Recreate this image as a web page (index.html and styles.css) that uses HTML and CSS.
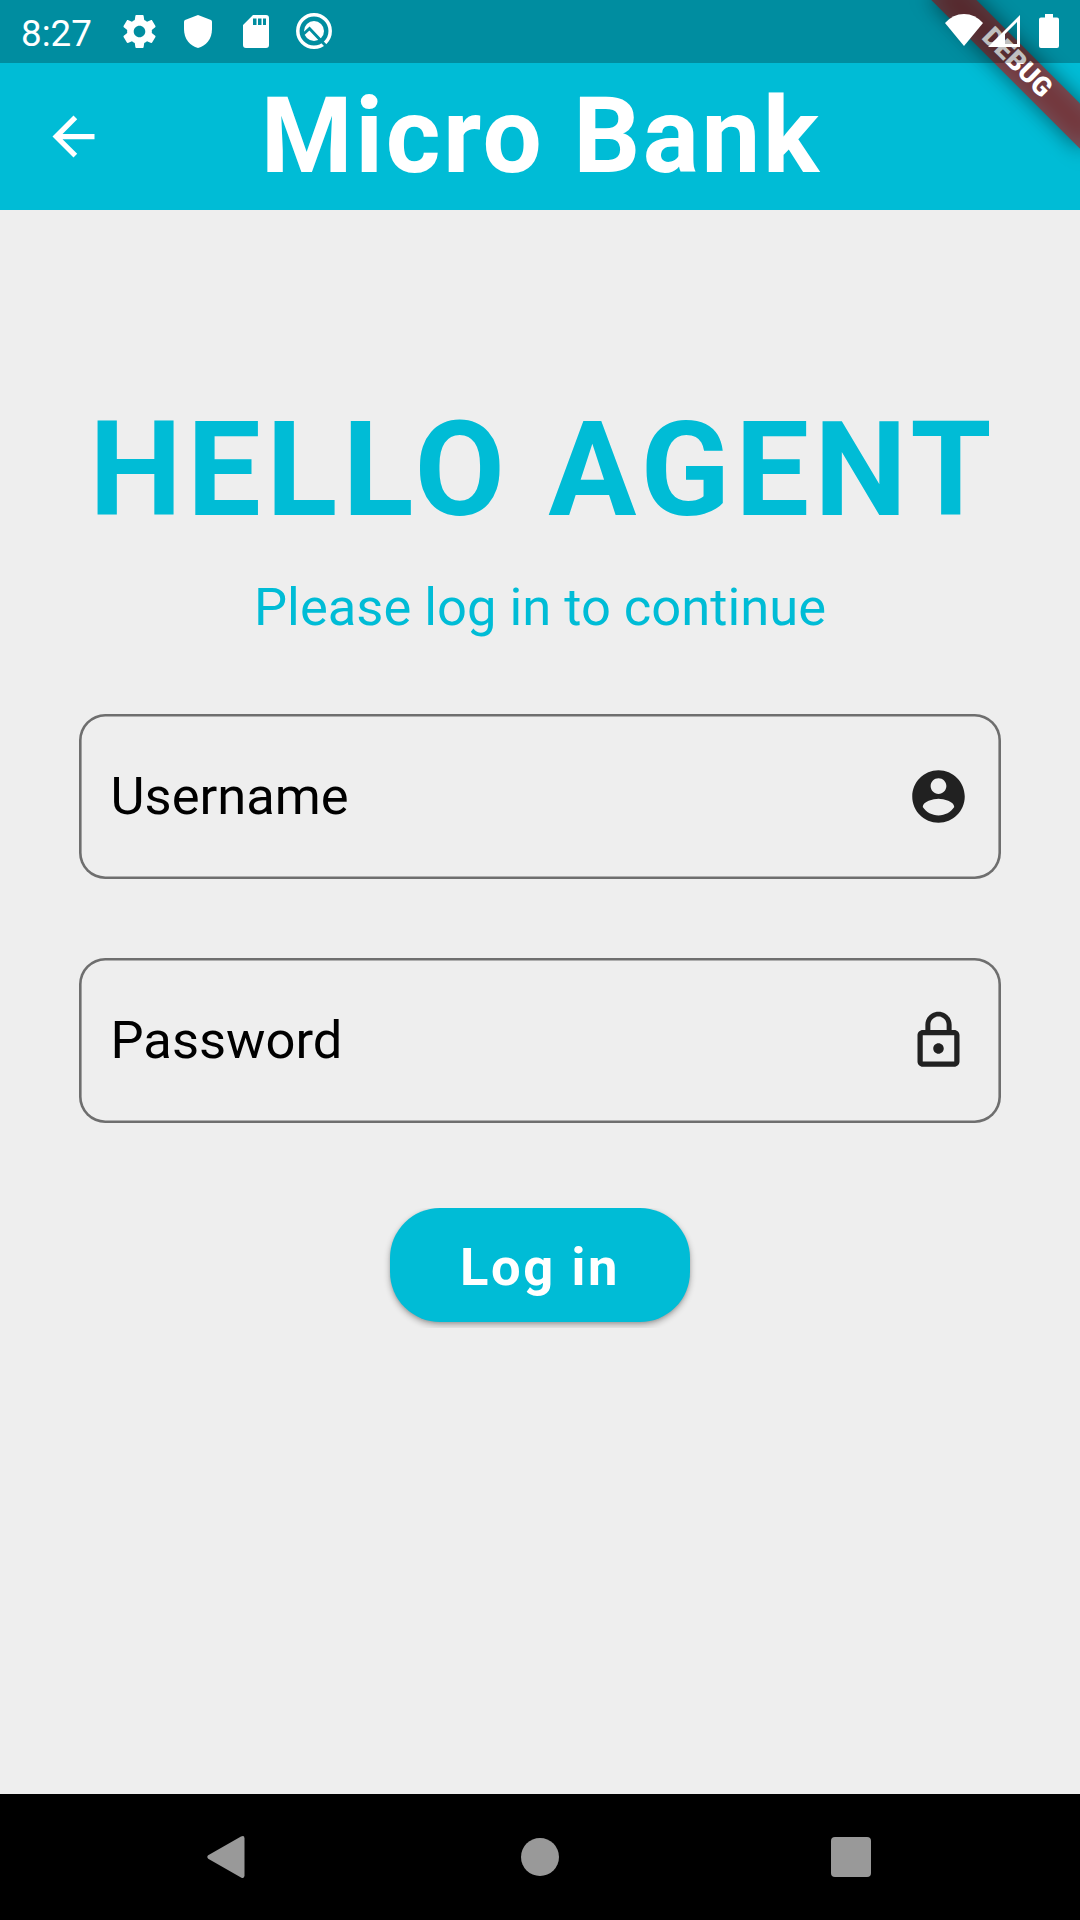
FILE: index.html
```html
<!DOCTYPE html>
<html lang="en">
<head>
<meta charset="utf-8">
<title>Micro Bank</title>
<link rel="stylesheet" href="styles.css">
</head>
<body>
<div class="screen">
  <header class="app-bar">
    <svg class="back" viewBox="0 0 24 24"><path d="M20 11H7.83l5.59-5.59L12 4l-8 8 8 8 1.41-1.41L7.83 13H20v-2z"/></svg>
    <h1 class="app-title">Micro Bank</h1>
  </header>

  <main class="content">
    <h2 class="greeting">HELLO AGENT</h2>
    <p class="prompt">Please log in to continue</p>
    <div class="field">
      <span class="label">Username</span>
      <svg class="field-icon" viewBox="0 0 24 24"><path d="M12 2C6.48 2 2 6.48 2 12s4.48 10 10 10 10-4.48 10-10S17.52 2 12 2zm0 3c1.66 0 3 1.34 3 3s-1.34 3-3 3-3-1.34-3-3 1.34-3 3-3zm0 14.2c-2.5 0-4.71-1.28-6-3.22.03-1.99 4-3.08 6-3.08 1.99 0 5.97 1.09 6 3.08-1.29 1.94-3.5 3.22-6 3.22z"/></svg>
    </div>
    <div class="field">
      <span class="label">Password</span>
      <svg class="field-icon" viewBox="0 0 24 24"><path d="M12 17c1.1 0 2-.9 2-2s-.9-2-2-2-2 .9-2 2 .9 2 2 2zm6-9h-1V6c0-2.76-2.24-5-5-5S7 3.24 7 6v2H6c-1.1 0-2 .9-2 2v10c0 1.1.9 2 2 2h12c1.1 0 2-.9 2-2V10c0-1.1-.9-2-2-2zM8.9 6c0-1.71 1.39-3.1 3.1-3.1s3.1 1.39 3.1 3.1v2H8.9V6zM18 20H6V10h12v10z"/></svg>
    </div>
    <div class="button-wrap"><button class="login" type="button">Log in</button></div>
  </main>

  <nav class="nav-bar">
    <svg class="nav-back" viewBox="0 0 38 42"><path d="M1.2 19.3 34 .6Q37.5-1 37.5 2.5V39.5Q37.5 43 34 41.4L1.2 22.7Q-.6 21 1.2 19.3z"/></svg>
    <span class="nav-home"></span>
    <span class="nav-recent"></span>
  </nav>

  <div class="banner-corner">
    <div class="banner-shadow"></div>
    <div class="banner">DEBUG</div>
  </div>

  <div class="status-bar">
    <span class="clock">8:27</span>
    <svg class="gear" viewBox="2 2 20 20"><path d="M19.43 12.98c.04-.32.07-.64.07-.98s-.03-.66-.07-.98l2.11-1.65c.19-.15.24-.42.12-.64l-2-3.46c-.12-.22-.39-.3-.61-.22l-2.49 1c-.52-.4-1.08-.73-1.69-.98l-.38-2.65C14.46 2.18 14.25 2 14 2h-4c-.25 0-.46.18-.49.42l-.38 2.65c-.61.25-1.17.59-1.69.98l-2.49-1c-.23-.09-.49 0-.61.22l-2 3.46c-.13.22-.07.49.12.64l2.11 1.65c-.04.32-.07.65-.07.98s.03.66.07.98l-2.11 1.65c-.19.15-.24.42-.12.64l2 3.46c.12.22.39.3.61.22l2.49-1c.52.4 1.08.73 1.69.98l.38 2.65c.03.24.24.42.49.42h4c.25 0 .46-.18.49-.42l.38-2.65c.61-.25 1.17-.59 1.69-.98l2.49 1c.23.09.49 0 .61-.22l2-3.46c.12-.22.07-.49-.12-.64l-2.11-1.65zM12 15.5c-1.93 0-3.5-1.57-3.5-3.5s1.57-3.5 3.5-3.5 3.5 1.57 3.5 3.5-1.57 3.5-3.5 3.5z"/></svg>
    <svg class="shield" viewBox="0 0 28 33"><path d="M14 0 27 5Q28 5.5 28 6.5V14C28 24 22 31 14 33 6 31 0 24 0 14V6.5Q0 5.5 1 5z"/></svg>
    <svg class="sd" viewBox="0 0 26 33"><path fill-rule="evenodd" d="M10 0H23Q26 0 26 3V30Q26 33 23 33H3Q0 33 0 30V10zM10 3.5V10H13.5V3.5zM15 3.5V10H18.5V3.5zM20 3.5V10H23V3.5z"/></svg>
    <svg class="q-icon" viewBox="0 0 36 36"><circle class="ring" cx="18" cy="18" r="16.2"/><circle cx="18" cy="18" r="10"/><path class="cut" d="M7.5 21 13.500 15.500 30 33"/></svg>
    <span class="spacer"></span>
    <svg class="wifi" viewBox="0 0 38 32"><path d="M19 32 0 9Q8 0 19 0T38 9z"/></svg>
    <svg class="signal" viewBox="0 0 32 32"><path fill-rule="evenodd" d="M0 32 32 0V32zM17 19V29H29V7z"/></svg>
    <svg class="battery" viewBox="0 0 20 34"><path d="M6 0H14V3.5H18Q20 3.5 20 5.5V32Q20 34 18 34H2Q0 34 0 32V5.5Q0 3.5 2 3.5H6z"/></svg>
  </div>
</div>
</body>
</html>
```
FILE: styles.css
```css
* { box-sizing: border-box; }

body {
  margin: 0;
  font-family: Roboto, sans-serif;
}

h1, h2, p { margin: 0; }

svg { display: block; flex: none; }

.screen {
  position: relative;
  display: flex;
  flex-direction: column;
  width: 1080px;
  height: 1920px;
  overflow: hidden;
  background: #eeeeee;
}

/* App bar */
.app-bar {
  display: grid;
  grid-template-columns: 147px 1fr 147px;
  align-items: center;
  height: 210px;
  padding-top: 63px;
  background: #00bcd6;
  color: #fff;
}

.back {
  width: 63px;
  height: 63px;
  justify-self: center;
  fill: #fff;
}

.app-title {
  margin-right: -2.6px;
  font-size: 105px;
  font-weight: 700;
  line-height: 123px;
  letter-spacing: 2.625px;
  text-align: center;
  white-space: nowrap;
}

/* Login form */
.content {
  flex: 1;
  padding: 183px 79px 0;
  color: #00bcd6;
}

.greeting {
  margin-right: -6px;
  font-size: 131.25px;
  font-weight: 700;
  line-height: 154px;
  letter-spacing: 5.25px;
  text-align: center;
  white-space: nowrap;
}

.prompt {
  margin: 29px 0 76px;
  font-size: 52.5px;
  line-height: 62px;
  text-align: center;
}

.field {
  display: flex;
  align-items: center;
  justify-content: space-between;
  height: 165px;
  margin-bottom: 79px;
  padding: 0 31px 0 31.5px;
  border-radius: 26.25px;
  box-shadow: inset 0 0 0 2.6px #6e6e6e;
}

.label {
  padding-bottom: 1px;
  color: #000;
  font-size: 52.5px;
  line-height: 62px;
}

.field-icon {
  width: 63px;
  height: 63px;
  fill: #212121;
}

.button-wrap {
  display: flex;
  justify-content: center;
  margin-top: 85px;
  padding-bottom: 6px;
  overflow: hidden;
}

.login {
  width: 300px;
  height: 114px;
  padding: 4px 0 0;
  border: 0;
  border-radius: 50px;
  background: #00bcd6;
  box-shadow: 0 3px 6px rgba(0, 0, 0, .3), 0 1px 3px rgba(0, 0, 0, .1);
  color: #fff;
  font: 700 52.5px/62px Roboto, sans-serif;
  letter-spacing: 2.625px;
}

/* System navigation */
.nav-bar {
  display: flex;
  align-items: center;
  height: 126px;
  padding: 0 209px 0 206.5px;
  justify-content: space-between;
  background: #000;
}

.nav-back {
  width: 38px;
  height: 42px;
  fill: #999;
}

.nav-home {
  width: 38px;
  height: 38px;
  margin-left: 3.5px;
  border-radius: 50%;
  background: #999;
}

.nav-recent {
  width: 40px;
  height: 40px;
  border-radius: 4px;
  background: #999;
}

/* Corner ribbon */
.banner-corner {
  position: absolute;
  inset: 0 0 auto auto;
  width: 300px;
  height: 300px;
  overflow: hidden;
}

.banner,
.banner-shadow {
  position: absolute;
  top: 47.35px;
  left: 131.9px;
  width: 210px;
  height: 31.5px;
  transform: rotate(45deg);
}

.banner-shadow {
  background: rgba(0, 0, 0, .5);
  filter: blur(10.4px);
}

.banner {
  background: rgba(183, 28, 28, .627);
  color: #fff;
  font-size: 26.8px;
  font-weight: 900;
  line-height: 31.5px;
  text-align: center;
}

/* System status bar */
.status-bar {
  position: absolute;
  inset: 0 0 auto 0;
  display: flex;
  align-items: flex-start;
  height: 63px;
  padding: 0 21px;
  background: rgba(0, 0, 0, .25);
  fill: #fff;
}

.clock {
  width: 71px;
  margin-top: 12px;
  color: #fff;
  font-size: 36.75px;
  line-height: 43px;
}

.gear { width: 33px; height: 33px; margin: 15px 0 0 31px; }
.shield { width: 28px; height: 33px; margin: 15px 0 0 28px; }
.sd { width: 26px; height: 33px; margin: 15px 0 0 31px; }
.q-icon { width: 36px; height: 36px; margin: 13px 0 0 27px; }
.ring { fill: none; stroke: #fff; stroke-width: 3.5; }
.cut { fill: none; stroke: #008da0; stroke-width: 3; }
.spacer { flex: 1; }
.wifi { width: 38px; height: 32px; margin-top: 14px; }
.signal { width: 32px; height: 32px; margin: 15px 0 0 5px; }
.battery { width: 20px; height: 34px; margin: 14px 0 0 19px; }
```
